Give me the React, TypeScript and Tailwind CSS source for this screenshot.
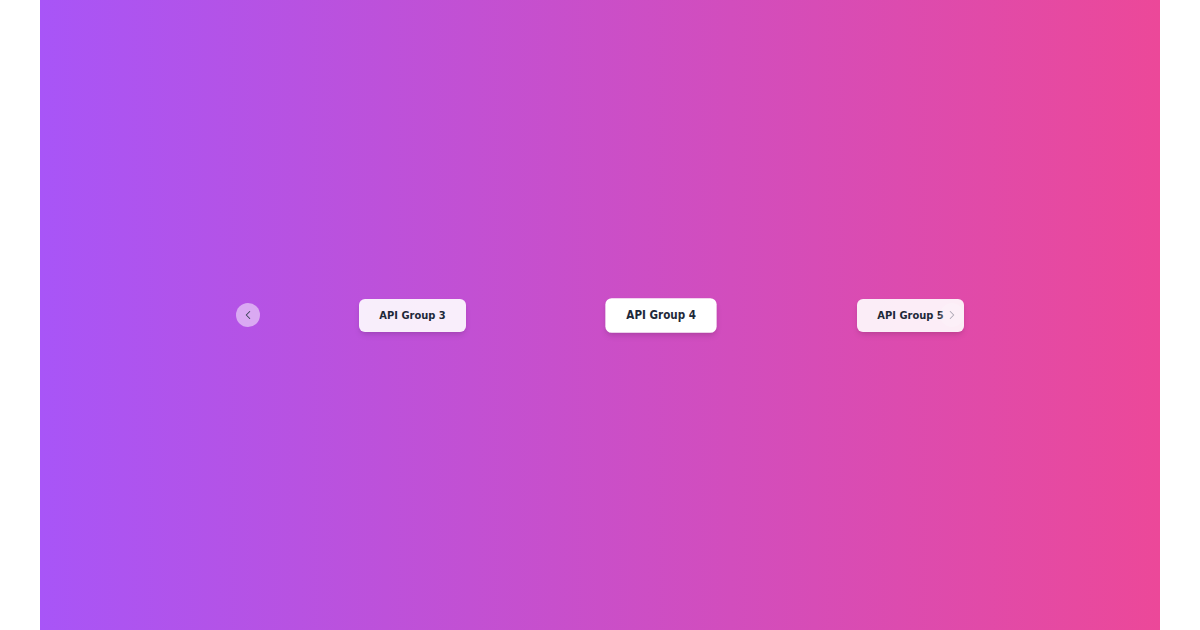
import React, { useState } from 'react';
import { ChevronLeft, ChevronRight } from 'lucide-react';

const groups = Array.from({ length: 5 }, (_, i) => `API Group ${i + 1}`);

function App() {
  // index of the highlighted slide; the neighbours sit on either side
  const [active, setActive] = useState(3);
  const visible = [active - 1, active, active + 1];
  const atStart = active - 1 === 0;
  const atEnd = active + 1 === groups.length - 1;

  return (
    <div className="min-h-screen bg-white" style={{ fontFamily: '"DejaVu Sans Condensed", "DejaVu Sans", sans-serif' }}>
      <div className="mx-10 h-[630px] bg-linear-to-r/srgb from-[#a855f7] to-[#ec4899] flex items-center justify-center">
        <div className="relative w-[728px] h-10 flex items-center">
          <div className="flex items-center pl-[52px]">
            {visible.map((idx) => {
              const current = idx === active;
              return (
                <div key={idx} className="w-[249px] flex justify-center">
                  <button
                    onClick={() => setActive(idx)}
                    className={`rounded-md px-5 py-2 text-[11px] leading-[17px] font-bold text-gray-800 shadow-md transition-transform ${
                      current ? 'bg-white scale-105' : 'bg-white/90'
                    }`}
                  >
                    {groups[idx]}
                  </button>
                </div>
              );
            })}
          </div>

          <button
            disabled={atStart}
            onClick={() => setActive((a) => Math.max(1, a - 1))}
            className="absolute left-0 top-1/2 -translate-y-1/2 w-6 h-6 rounded-full bg-white/50 flex items-center justify-center text-gray-700 disabled:opacity-40"
          >
            <ChevronLeft size={14} strokeWidth={1.75} />
          </button>
          <button
            disabled={atEnd}
            onClick={() => setActive((a) => Math.min(groups.length - 2, a + 1))}
            className="absolute right-0 top-1/2 -translate-y-1/2 w-6 h-6 rounded-full bg-white/50 flex items-center justify-center text-gray-700 disabled:opacity-40"
          >
            <ChevronRight size={14} strokeWidth={1.75} />
          </button>
        </div>
      </div>
    </div>
  );
}

export default App;
